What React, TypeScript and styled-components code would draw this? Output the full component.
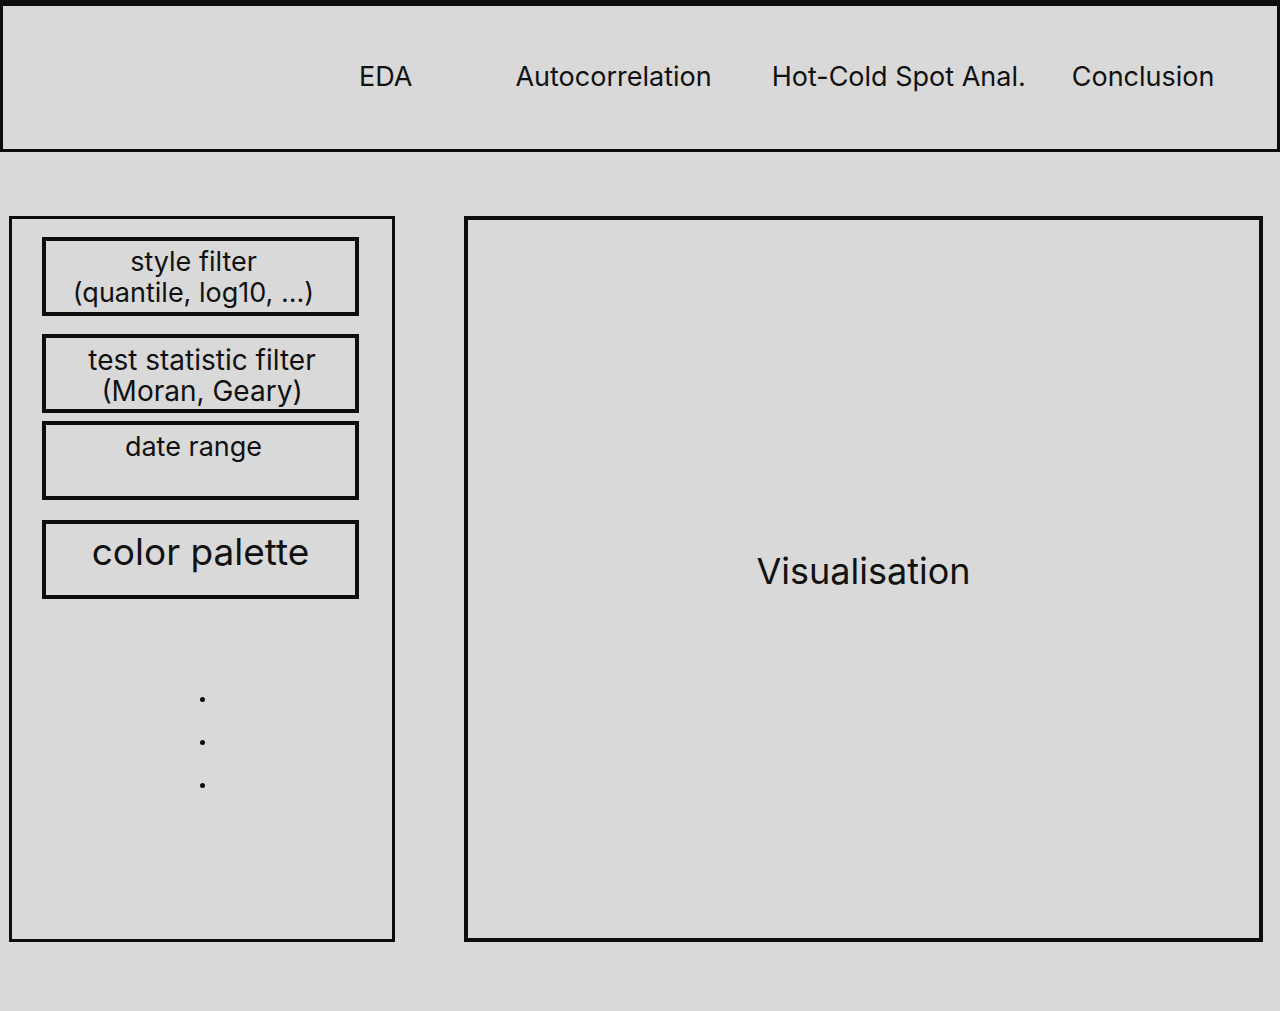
import React from "react";
import styled, { createGlobalStyle } from "styled-components";

const GlobalStyle = createGlobalStyle`
  html, body {
    margin: 0;
    padding: 0;
    background: #d9d9d9;
  }
  body {
    font-family: Inter, "Noto Sans", "Liberation Sans", sans-serif;
    color: #111111;
    width: 1280px;
    height: 1011px;
    overflow: hidden;
  }
  * { box-sizing: border-box; }
`;

const Page = styled.div`
  width: 1280px;
  height: 1011px;
  display: flex;
  flex-direction: column;
  background: #d9d9d9;
`;

const Header = styled.header`
  height: 152px;
  border-style: solid;
  border-color: #0d0d0d;
  border-width: 6px 3px 3px 3px;
  display: flex;
  align-items: center;
  padding-left: 356px;
  padding-bottom: 2px;
`;

const NavItem = styled.span<{ $offset: number }>`
  font-size: 27px;
  font-weight: 400;
  margin-left: ${(p) => p.$offset}px;
  white-space: nowrap;
`;

const Main = styled.main`
  display: flex;
  gap: 69px;
  padding: 64px 17px 0 9px;
`;

const Sidebar = styled.aside`
  width: 386px;
  height: 726px;
  border: 3px solid #0d0d0d;
  display: flex;
  flex-direction: column;
  align-items: flex-start;
  padding: 18px 0 0 30px;
`;

const FilterBox = styled.div<{
  $top: number;
  $shift: number;
  $pad: number;
  $size: number;
  $lh: number;
}>`
  width: 317px;
  height: 79px;
  border: 4px solid #0d0d0d;
  margin-top: ${(p) => p.$top}px;
  padding: ${(p) => p.$pad}px ${(p) => Math.max(0, -p.$shift)}px 0 ${(p) => Math.max(0, p.$shift)}px;
  text-align: center;
  font-size: ${(p) => p.$size}px;
  line-height: ${(p) => p.$lh}px;
  white-space: nowrap;
`;

const Dots = styled.div`
  align-self: center;
  margin-left: -30px;
  margin-top: 98px;
  display: flex;
  flex-direction: column;
  gap: 38px;
`;

const Dot = styled.span`
  width: 5px;
  height: 5px;
  border-radius: 50%;
  background: #0d0d0d;
`;

const Visual = styled.section`
  width: 799px;
  height: 726px;
  border: 4px solid #0d0d0d;
  display: flex;
  align-items: center;
  justify-content: center;
  padding-bottom: 16px;
  font-size: 36px;
`;

const navItems = [
  { label: "EDA", offset: 0 },
  { label: "Autocorrelation", offset: 103 },
  { label: "Hot-Cold Spot Anal.", offset: 60 },
  { label: "Conclusion", offset: 46 },
];

export default function App() {
  return (
    <>
      <GlobalStyle />
      <Page>
        <Header>
          {navItems.map((n) => (
            <NavItem key={n.label} $offset={n.offset}>
              {n.label}
            </NavItem>
          ))}
        </Header>
        <Main>
          <Sidebar>
            <FilterBox $top={0} $shift={-14} $pad={5} $size={27} $lh={31}>
              style filter
              <br />
              (quantile, log10, ...)
            </FilterBox>
            <FilterBox $top={18} $shift={3} $pad={7} $size={28} $lh={31}>
              test statistic filter
              <br />
              (Moran, Geary)
            </FilterBox>
            <FilterBox $top={8} $shift={-14} $pad={6} $size={27} $lh={31}>
              date range
            </FilterBox>
            <FilterBox $top={20} $shift={0} $pad={8} $size={37} $lh={40}>
              color palette
            </FilterBox>
            <Dots>
              <Dot />
              <Dot />
              <Dot />
            </Dots>
          </Sidebar>
          <Visual>Visualisation</Visual>
        </Main>
      </Page>
    </>
  );
}
